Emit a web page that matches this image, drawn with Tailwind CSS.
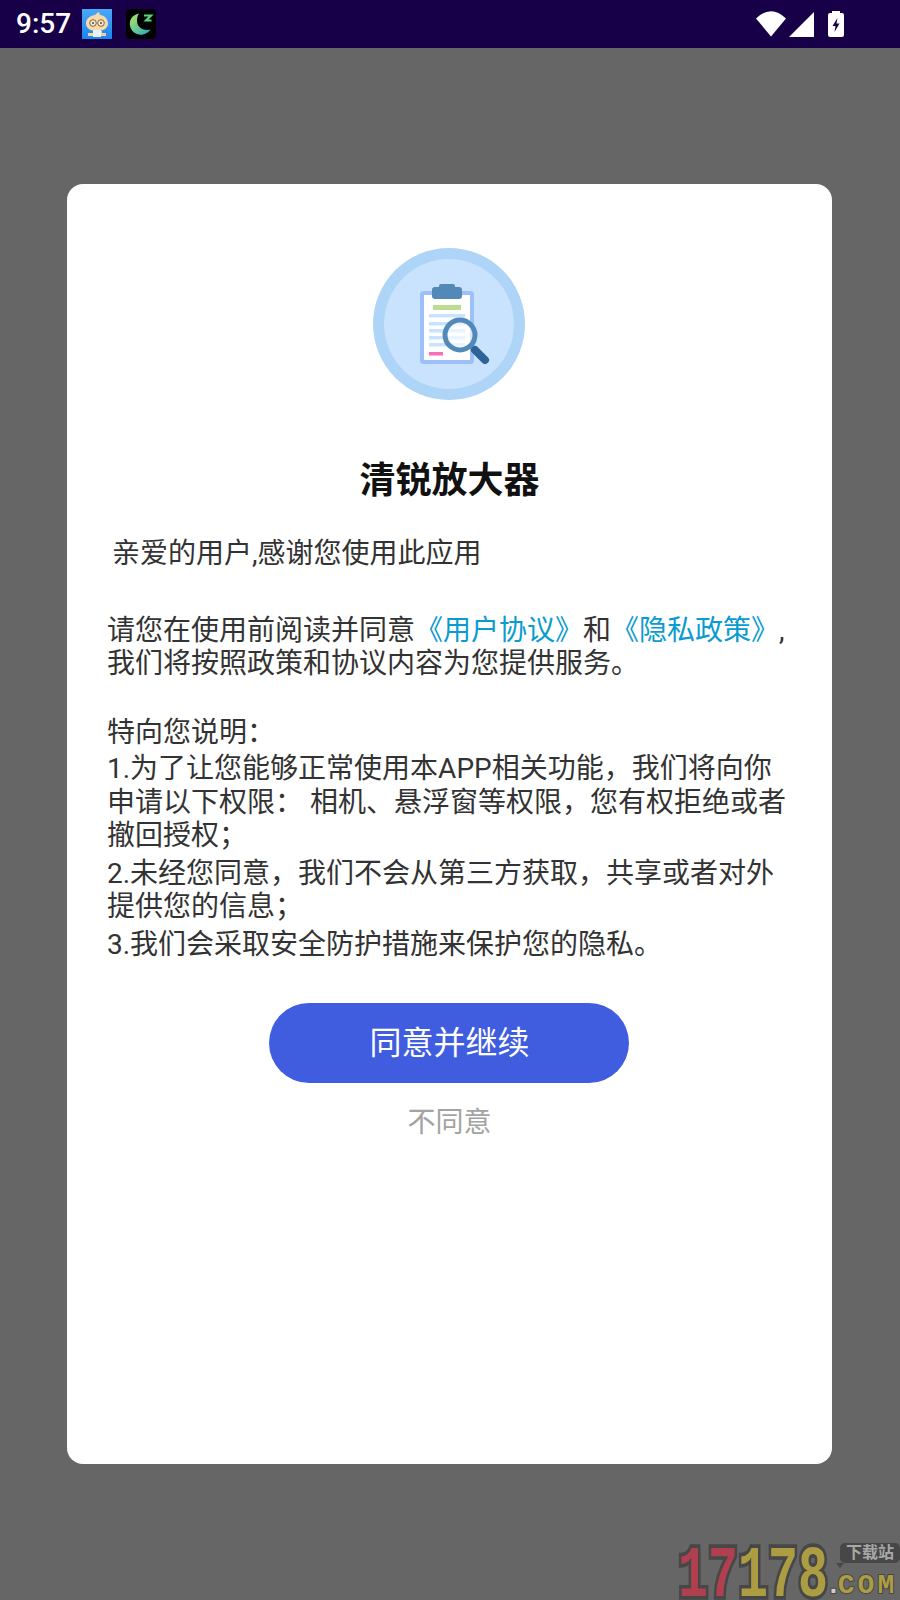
<!DOCTYPE html>
<html lang="zh-CN">
<head>
  <meta charset="UTF-8" />
  <title>清锐放大器</title>
  <script src="https://cdn.jsdelivr.net/npm/@tailwindcss/browser@4"></script>
</head>
<body class="bg-[#666666] font-['Roboto','Noto_Sans_CJK_SC',sans-serif]">
<div class="relative w-[900px] h-[1600px] overflow-hidden">

  <!-- Status bar -->
  <div class="h-[48px] bg-[#170048] flex items-center text-white">
    <span class="ml-[16px] w-[56px] text-[28px] font-medium leading-none">9:57</span>
    <svg class="ml-[10px]" width="30" height="30" viewBox="0 0 30 30">
      <defs>
        <linearGradient id="babyBg" x1="0" y1="0" x2="0" y2="1"><stop offset="0" stop-color="#4aa8f8"/><stop offset="1" stop-color="#1c86ee"/></linearGradient>
        <linearGradient id="moonFill" x1="0" y1="0" x2="1" y2="1"><stop offset="0" stop-color="#b5e85a"/><stop offset="1" stop-color="#22a8c8"/></linearGradient>
      </defs>
      <rect width="30" height="30" fill="url(#babyBg)"/>
      <path d="M4 14.500C4 9 9 6.500 13 6c1-1.500 3-2.500 4-3 0 1 .5 2 1 3 4 .5 8 3.500 8 8.500C26 19.500 21 22 15 22S4 19.500 4 14.500z" fill="#f8d9a8"/>
      <circle cx="11" cy="14" r="3.300" fill="#fbe9cf" stroke="#7d6347"/>
      <circle cx="19" cy="14" r="3.300" fill="#fbe9cf" stroke="#7d6347"/>
      <circle cx="11" cy="14" r="1" fill="#5b4632"/>
      <circle cx="19" cy="14" r="1" fill="#5b4632"/>
      <path d="M6 24h5v-2h9v2h4v3H6z" fill="#f5d3a0"/>
      <rect x="11" y="21" width="8" height="7" fill="#e8f2fc"/>
    </svg>
    <svg class="ml-[14px]" width="30" height="30" viewBox="0 0 30 30">
      <rect width="30" height="30" rx="4" fill="#000"/>
      <path d="M13 4.500C6 6 3 11 4 16.500 5 23 11 26.500 17 25.500c3-.5 6-2.500 7.500-5C18 22 13 19 11.500 15 10.500 11 11 7.500 13 4.500z" fill="url(#moonFill)"/>
      <path d="M18 6.500h7l-5 5h5.500" fill="none" stroke="#52d67c" stroke-width="2.200"/>
    </svg>
    <div class="ml-auto mr-[56px] flex items-center">
      <svg width="30" height="26" viewBox="0 0 30 26"><path d="M0 7.500Q15 -7 30 7.500L15 25.500z" fill="#fff"/></svg>
      <svg class="ml-[3px]" width="25" height="25" viewBox="0 0 25 25"><path d="M0 25L25 0V25z" fill="#fff"/></svg>
      <svg class="ml-[14px]" width="16" height="26" viewBox="0 0 16 26">
        <path d="M4 0h8v2h2a2 2 0 0 1 2 2v20a2 2 0 0 1-2 2H2a2 2 0 0 1-2-2V4a2 2 0 0 1 2-2h2z" fill="#fff"/>
        <path d="M9.500 7L4.500 15h3l-1 6 5-8.500h-3z" fill="#170048"/>
      </svg>
    </div>
  </div>

  <!-- Dialog -->
  <div class="ml-[67px] mt-[136px] w-[765px] h-[1280px] pr-[2px] bg-white rounded-[16px] flex flex-col items-center">
    <svg class="mt-[64px] shrink-0" width="152" height="152" viewBox="0 0 152 152">
      <circle cx="76" cy="76" r="76" fill="#aed4f7"/>
      <circle cx="76" cy="76" r="65" fill="#c9e3fe"/>
      <rect x="47" y="43" width="54" height="73" rx="3.500" fill="#9dc0fb"/>
      <rect x="51" y="47" width="46" height="65" fill="#fff"/>
      <rect x="59" y="39" width="30" height="12" rx="3" fill="#5389b8"/>
      <rect x="66" y="36" width="16" height="6" rx="2" fill="#5389b8"/>
      <rect x="60" y="57" width="28" height="5" fill="#bcdc92"/>
      <rect x="56" y="66" width="36" height="3.500" fill="#c9e3fe"/>
      <rect x="56" y="74" width="36" height="3.500" fill="#c9e3fe"/>
      <rect x="56" y="81" width="36" height="3.500" fill="#c9e3fe"/>
      <rect x="56" y="88" width="36" height="3.500" fill="#c9e3fe"/>
      <rect x="56" y="95" width="36" height="3.500" fill="#c9e3fe"/>
      <rect x="56" y="104" width="14" height="3.500" fill="#fb6eb4"/>
      <path d="M97 97L103 103" stroke="#5389b8" stroke-width="4"/>
      <path d="M102 102L112 112" stroke="#2f6296" stroke-width="8" stroke-linecap="round"/>
      <circle cx="87" cy="87" r="15" fill="#fff" fill-opacity=".6" stroke="#5389b8" stroke-width="5"/>
    </svg>

    <h1 class="mt-[57px] pl-[2px] text-[36px] leading-[48px] font-bold text-[#111]">清锐放大器</h1>

    <div class="w-full pl-[40px] pr-[41px] mt-[32px] text-[28px] text-[#333] leading-[33.500px]">
      <p class="pl-[5px]">亲爱的用户,感谢您使用此应用</p>
      <p class="mt-[43px]">请您在使用前阅读并同意<span class="text-[#0a9bd0]">《用户协议》</span>和<span class="text-[#0a9bd0]">《隐私政策》</span>,<br>我们将按照政策和协议内容为您提供服务。</p>
      <p class="mt-[35px]">特向您说明：</p>
      <p class="mt-[3px]">1.为了让您能够正常使用本APP相关功能，我们将向你申请以下权限： 相机、悬浮窗等权限，您有权拒绝或者撤回授权；</p>
      <p class="mt-[4px]">2.未经您同意，我们不会从第三方获取，共享或者对外提供您的信息；</p>
      <p class="mt-[4px]">3.我们会采取安全防护措施来保护您的隐私。</p>
    </div>

    <button class="mt-[42px] w-[360px] h-[80px] pl-[2px] shrink-0 rounded-full bg-[#405de0] text-white text-[32px]">同意并继续</button>
    <span class="mt-[22px] pl-[2px] text-[28px] leading-[36px] text-[#a3a3a3]">不同意</span>
  </div>

  <!-- Watermark -->
  <div class="absolute left-[678px] top-[1562px] text-[50px] leading-[30px] font-bold font-['Liberation_Mono'] scale-y-[1.45] [-webkit-text-stroke:5px_#474747] [paint-order:stroke_fill] text-[#ac9c42]"><span class="text-[#b04050]">17</span>178</div>
  <div class="absolute left-[840px] top-[1543px] w-[60px] h-[20px] rounded-[5px] bg-[#474747] text-[#a8a8a8] text-[16px] leading-[20px] text-center font-bold">下载站</div>
  <div class="absolute left-[836px] top-[1563px] w-0 h-0 border-l-[4px] border-l-transparent border-t-[5px] border-t-[#474747] border-r-[4px] border-r-transparent"></div>
  <div class="absolute left-[825px] top-[1573px] text-[#ac9c42] text-[28px] leading-[26px] tracking-[3px] font-['Liberation_Mono'] font-bold [-webkit-text-stroke:2px_#474747] [paint-order:stroke_fill]"><span class="tracking-[-4px] text-[#cccccc]">.</span>COM</div>
</div>
</body>
</html>
